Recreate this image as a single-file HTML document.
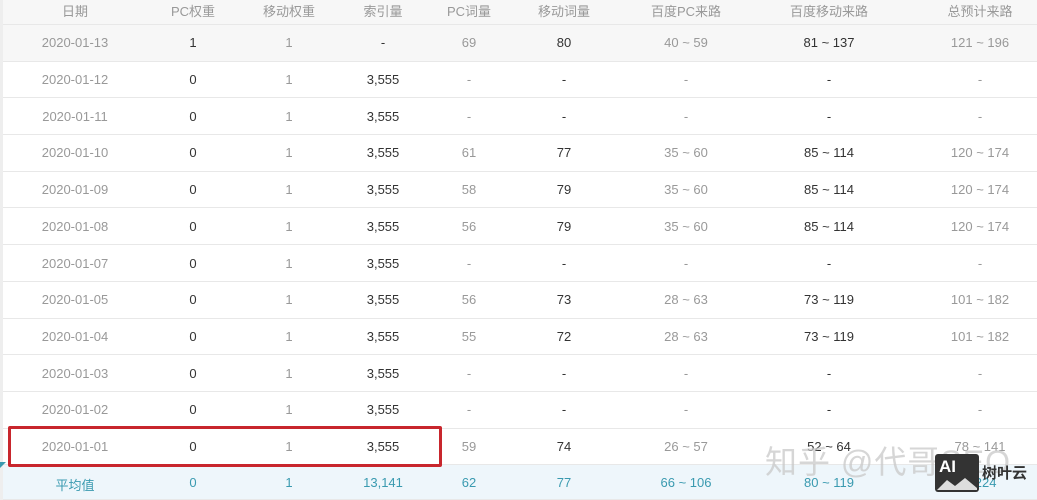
<!DOCTYPE html><html><head><meta charset="utf-8"><style>
body{margin:0;width:1037px;height:500px;overflow:hidden;background:#fff;font-family:"Liberation Sans","Noto Sans CJK SC",sans-serif;font-size:13px;position:relative}
.r{position:absolute;left:0;width:1037px;border-bottom:1px solid #e8e8e8;box-sizing:border-box}
.c{position:absolute;top:0;transform:translateX(-50%);white-space:nowrap}
.g{color:#999}.b{color:#333}.t{color:#3a9ab0}
</style></head><body>
<div id="t"></div>
<div style="position:absolute;left:0;top:0;width:3px;height:500px;background:#eee"></div>
<div style="position:absolute;left:8px;top:426px;width:428px;height:35px;border:3px solid #c8262d;border-radius:2px"></div>
<div style="position:absolute;left:765px;top:437px;font-size:32px;color:rgba(200,200,200,.75);letter-spacing:1px">知乎 @代哥SEO</div>
<div style="position:absolute;left:935px;top:454px;width:44px;height:38px;background:#333;border-radius:3px;color:#fff;font-weight:bold;font-size:17px;line-height:26px;padding-left:4px;box-sizing:border-box">AI<svg style="position:absolute;left:2px;bottom:2px" width="40" height="14"><path d="M0 14 L10 4 L18 10 L28 2 L40 12 L40 14Z" fill="#ddd"/></svg></div>
<div style="position:absolute;left:982px;top:462px;font-size:15px;font-weight:bold;color:#333">树叶云</div>
<script>
(function(){
var X=[75,193,289,383,469,564,686,829,980];
var cls=['g','b','g','b','g','b','g','b','g'];
var H=['日期','PC权重','移动权重','索引量','PC词量','移动词量','百度PC来路','百度移动来路','总预计来路'];
var D=[
['2020-01-13','1','1','-','69','80','40 ~ 59','81 ~ 137','121 ~ 196'],
['2020-01-12','0','1','3,555','-','-','-','-','-'],
['2020-01-11','0','1','3,555','-','-','-','-','-'],
['2020-01-10','0','1','3,555','61','77','35 ~ 60','85 ~ 114','120 ~ 174'],
['2020-01-09','0','1','3,555','58','79','35 ~ 60','85 ~ 114','120 ~ 174'],
['2020-01-08','0','1','3,555','56','79','35 ~ 60','85 ~ 114','120 ~ 174'],
['2020-01-07','0','1','3,555','-','-','-','-','-'],
['2020-01-05','0','1','3,555','56','73','28 ~ 63','73 ~ 119','101 ~ 182'],
['2020-01-04','0','1','3,555','55','72','28 ~ 63','73 ~ 119','101 ~ 182'],
['2020-01-03','0','1','3,555','-','-','-','-','-'],
['2020-01-02','0','1','3,555','-','-','-','-','-'],
['2020-01-01','0','1','3,555','59','74','26 ~ 57','52 ~ 64','78 ~ 141'],
['平均值','0','1','13,141','62','77','66 ~ 106','80 ~ 119','~ 224']];
var h='';
function row(tp,ht,bg,cells,cl){h+='<div class="r" style="top:'+tp+'px;height:'+ht+'px;background:'+bg+'">';
for(var i=0;i<9;i++)h+='<div class="c '+(cl||cls[i])+'" style="left:'+X[i]+'px;top:'+(ht/2-8)+'px">'+cells[i]+'</div>';h+='</div>';}
row(-8,33,'#f7f7f7',H,'g');
for(var j=0;j<13;j++){var tp=25+36.7*j;row(tp,j==12?35:36.7,j==0?'#f7f7f7':(j==12?'#eef6fb':'#fff'),D[j],j==12?'t':null);}
document.getElementById('t').innerHTML=h;
})();
</script>
<div style="position:absolute;left:0;top:462px;width:0;height:0;border-top:6px solid #3a9ab0;border-right:6px solid transparent"></div>
</body></html>
